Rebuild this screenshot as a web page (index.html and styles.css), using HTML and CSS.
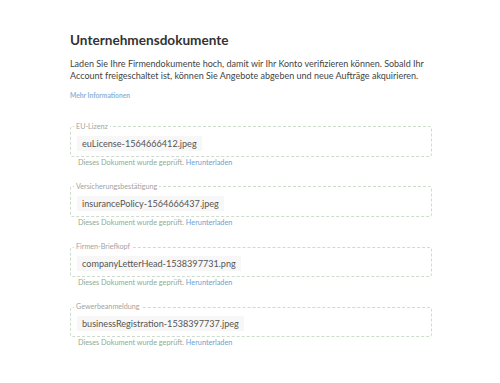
FILE: index.html
```html
<!DOCTYPE html>
<html lang="de">
<head>
  <meta charset="UTF-8" />
  <title>Unternehmensdokumente</title>
  <link rel="stylesheet" href="styles.css">
</head>
<body>

<div class="page">
  <h2>Unternehmensdokumente</h2>
  <p class="intro">Laden Sie Ihre Firmendokumente hoch, damit wir Ihr Konto verifizieren können. Sobald Ihr Account freigeschaltet ist, können Sie Angebote abgeben und neue Aufträge akquirieren.</p>
  <a class="more" href="#">Mehr Informationen</a>

  <div class="docs">
    <div class="doc">
      <fieldset>
        <legend>EU-Lizenz</legend>
        <span class="file">euLicense-1564666412.jpeg</span>
      </fieldset>
      <p class="status">Dieses Dokument wurde geprüft. <a href="#">Herunterladen</a></p>
    </div>

    <div class="doc">
      <fieldset>
        <legend>Versicherungsbestätigung</legend>
        <span class="file">insurancePolicy-1564666437.jpeg</span>
      </fieldset>
      <p class="status">Dieses Dokument wurde geprüft. <a href="#">Herunterladen</a></p>
    </div>

    <div class="doc">
      <fieldset>
        <legend>Firmen-Briefkopf</legend>
        <span class="file">companyLetterHead-1538397731.png</span>
      </fieldset>
      <p class="status">Dieses Dokument wurde geprüft. <a href="#">Herunterladen</a></p>
    </div>

    <div class="doc">
      <fieldset>
        <legend>Gewerbeanmeldung</legend>
        <span class="file">businessRegistration-1538397737.jpeg</span>
      </fieldset>
      <p class="status">Dieses Dokument wurde geprüft. <a href="#">Herunterladen</a></p>
    </div>
  </div>
</div>

</body>
</html>
```

FILE: styles.css
```css
body {
  font-family: Lato, 'Open Sans', sans-serif;
  background: #fff;
  margin: 0;
}

.page {
  width: 362px;
  padding: 31px 0 0 70px;
}

h2 {
  margin: 0;
  font-size: 13.6px;
  line-height: 18px;
  font-weight: 700;
  color: #333;
}

.intro {
  margin: 8.5px 0 0;
  width: 366px;
  font-size: 9px;
  line-height: 12px;
  color: #444;
}

.more {
  display: block;
  margin-top: 9px;
  font-size: 6.7px;
  line-height: 9px;
  font-weight: 700;
  color: #8bb4d9;
  text-decoration: none;
}

.docs {
  margin-top: 23px;
  display: flex;
  flex-direction: column;
  gap: 15.3px;
}

fieldset {
  margin: 0;
  padding: 5px 6px 5px;
  border: 1px dashed #cddccd;
  border-radius: 3px;
}

legend {
  padding: 0 2px;
  margin-left: -3px;
  font-size: 7.2px;
  line-height: 8px;
  color: #a3a3a3;
}

.file {
  display: block;
  width: fit-content;
  padding: 0 5px;
  height: 15px;
  line-height: 15px;
  background: #f7f7f7;
  font-size: 9.1px;
  color: #555;
}

.status {
  margin: 1px 0 0 8px;
  font-size: 7.3px;
  line-height: 10px;
  color: #8fab8f;
}

.status a {
  color: #6a9fd2;
  text-decoration: none;
}
```
